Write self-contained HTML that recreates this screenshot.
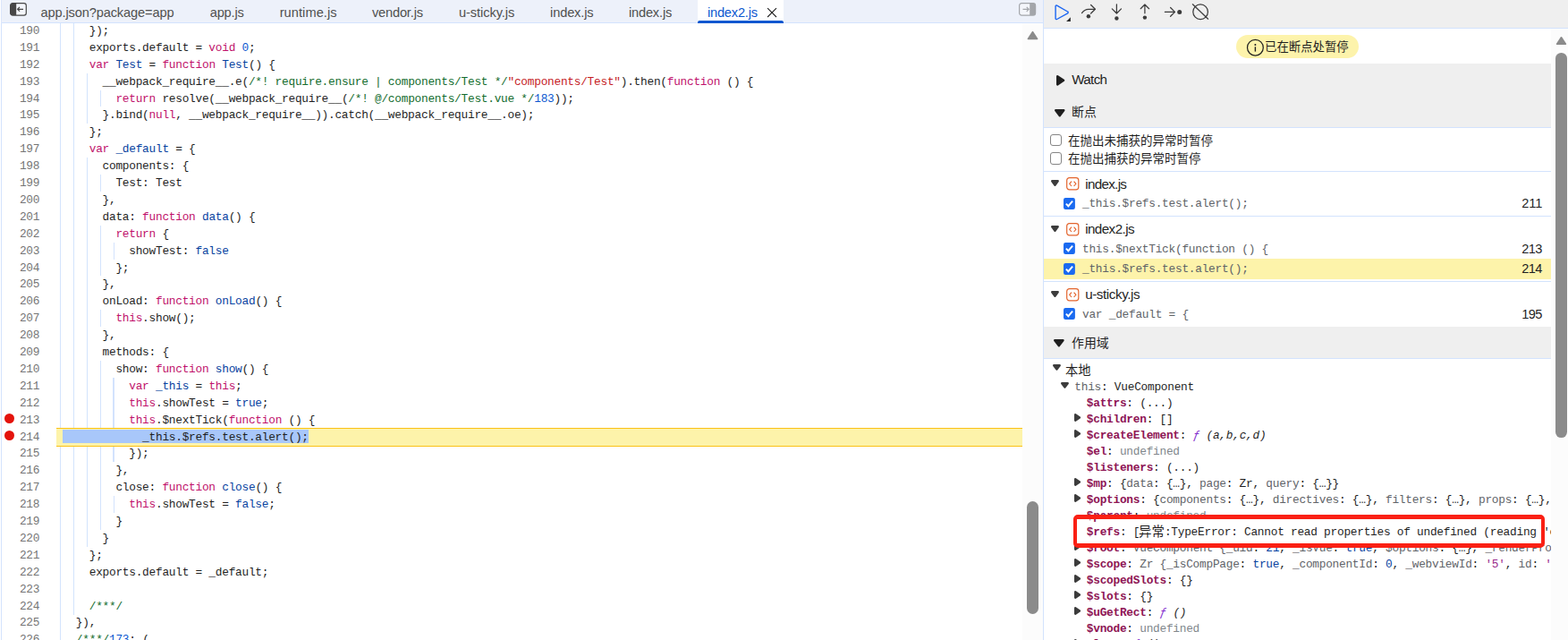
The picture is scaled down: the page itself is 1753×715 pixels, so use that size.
<!DOCTYPE html><html><head><meta charset="utf-8"><title>DevTools</title><style>
*{margin:0;padding:0;box-sizing:border-box}
html,body{width:1753px;height:715px;overflow:hidden;background:#fff}
body{position:relative;font-family:"Liberation Sans",sans-serif;color:#1f1f1f}
.a{position:absolute}
.m{font-family:"Liberation Mono",monospace;font-size:12.8px;letter-spacing:-0.254px;white-space:pre}
.cl{position:absolute;left:70.0px;height:18.9px;line-height:18.9px}
.ln{position:absolute;left:0;width:44.2px;text-align:right;height:18.9px;line-height:18.9px;color:#757575}
.k{color:#c0116b}.d{color:#0842a0}.n{color:#0b57d0}.s{color:#c5221f}.c{color:#146c2e}.t{color:#0842a0}
.g{position:absolute;width:1px;background:#d3e3fd}
.ui{position:absolute;white-space:pre;line-height:20px;height:20px}
svg{position:absolute;overflow:visible}
svg text{font-family:"Liberation Sans","Noto Sans CJK SC",sans-serif;fill:#1f1f1f;white-space:pre}
</style></head><body>
<div class="a" id="editor" style="left:0;top:26px;width:1143px;height:689px;overflow:hidden">
<div class="a" style="left:0;top:-26px;width:1143px;height:715px">
<div class="g" style="left:67px;top:25.00px;height:699.30px;width:1px"></div>
<div class="g" style="left:82px;top:25.00px;height:661.50px;width:1px"></div>
<div class="g" style="left:97px;top:81.70px;height:56.70px;width:1px"></div>
<div class="g" style="left:97px;top:176.20px;height:434.70px;width:1px"></div>
<div class="g" style="left:112px;top:100.60px;height:18.90px;width:1px"></div>
<div class="g" style="left:112px;top:195.10px;height:18.90px;width:1px"></div>
<div class="g" style="left:112px;top:251.80px;height:56.70px;width:1px"></div>
<div class="g" style="left:112px;top:346.30px;height:18.90px;width:1px"></div>
<div class="g" style="left:112px;top:403.00px;height:189.00px;width:1px"></div>
<div class="g" style="left:127px;top:270.70px;height:18.90px;width:1px"></div>
<div class="g" style="left:126px;top:421.90px;height:94.50px;width:2px"></div>
<div class="g" style="left:127px;top:554.20px;height:18.90px;width:1px"></div>
<div class="g" style="left:142px;top:478.60px;height:18.90px;width:1px"></div>
<div class="a" style="left:63px;top:478px;width:1080px;height:21px;background:#fdf3aa;border-top:1px solid #fbc116;border-bottom:1px solid #fbc116"></div>
<div class="a" style="left:70px;top:480px;width:275px;height:15px;background:#a8c7fa"></div>
<div class="ln m" style="top:25.90px">190</div>
<div class="cl m" style="top:25.90px">    });</div>
<div class="ln m" style="top:44.80px">191</div>
<div class="cl m" style="top:44.80px">    exports.default = <span class="k">void</span> <span class="n">0</span>;</div>
<div class="ln m" style="top:63.70px">192</div>
<div class="cl m" style="top:63.70px">    <span class="k">var</span> <span class="d">Test</span> = <span class="k">function</span> <span class="d">Test</span>() {</div>
<div class="ln m" style="top:82.60px">193</div>
<div class="cl m" style="top:82.60px">      __webpack_require__.e(<span class="c">/*! require.ensure | components/Test */</span><span class="s">"components/Test"</span>).then(<span class="k">function</span> () {</div>
<div class="ln m" style="top:101.50px">194</div>
<div class="cl m" style="top:101.50px">        <span class="k">return</span> resolve(__webpack_require__(<span class="c">/*! @/components/Test.vue */</span><span class="n">183</span>));</div>
<div class="ln m" style="top:120.40px">195</div>
<div class="cl m" style="top:120.40px">      }.bind(<span class="k">null</span>, __webpack_require__)).catch(__webpack_require__.oe);</div>
<div class="ln m" style="top:139.30px">196</div>
<div class="cl m" style="top:139.30px">    };</div>
<div class="ln m" style="top:158.20px">197</div>
<div class="cl m" style="top:158.20px">    <span class="k">var</span> <span class="d">_default</span> = {</div>
<div class="ln m" style="top:177.10px">198</div>
<div class="cl m" style="top:177.10px">      components: {</div>
<div class="ln m" style="top:196.00px">199</div>
<div class="cl m" style="top:196.00px">        Test: Test</div>
<div class="ln m" style="top:214.90px">200</div>
<div class="cl m" style="top:214.90px">      },</div>
<div class="ln m" style="top:233.80px">201</div>
<div class="cl m" style="top:233.80px">      data: <span class="k">function</span> <span class="d">data</span>() {</div>
<div class="ln m" style="top:252.70px">202</div>
<div class="cl m" style="top:252.70px">        <span class="k">return</span> {</div>
<div class="ln m" style="top:271.60px">203</div>
<div class="cl m" style="top:271.60px">          showTest: <span class="t">false</span></div>
<div class="ln m" style="top:290.50px">204</div>
<div class="cl m" style="top:290.50px">        };</div>
<div class="ln m" style="top:309.40px">205</div>
<div class="cl m" style="top:309.40px">      },</div>
<div class="ln m" style="top:328.30px">206</div>
<div class="cl m" style="top:328.30px">      onLoad: <span class="k">function</span> <span class="d">onLoad</span>() {</div>
<div class="ln m" style="top:347.20px">207</div>
<div class="cl m" style="top:347.20px">        <span class="k">this</span>.show();</div>
<div class="ln m" style="top:366.10px">208</div>
<div class="cl m" style="top:366.10px">      },</div>
<div class="ln m" style="top:385.00px">209</div>
<div class="cl m" style="top:385.00px">      methods: {</div>
<div class="ln m" style="top:403.90px">210</div>
<div class="cl m" style="top:403.90px">        show: <span class="k">function</span> <span class="d">show</span>() {</div>
<div class="ln m" style="top:422.80px">211</div>
<div class="cl m" style="top:422.80px">          <span class="k">var</span> <span class="d">_this</span> = <span class="k">this</span>;</div>
<div class="ln m" style="top:441.70px">212</div>
<div class="cl m" style="top:441.70px">          <span class="k">this</span>.showTest = <span class="t">true</span>;</div>
<div class="ln m" style="top:460.60px">213</div>
<div class="cl m" style="top:460.60px">          <span class="k">this</span>.$nextTick(<span class="k">function</span> () {</div>
<div class="ln m" style="top:479.50px">214</div>
<div class="cl m" style="top:479.50px">            _this.$refs.test.alert();</div>
<div class="ln m" style="top:498.40px">215</div>
<div class="cl m" style="top:498.40px">          });</div>
<div class="ln m" style="top:517.30px">216</div>
<div class="cl m" style="top:517.30px">        },</div>
<div class="ln m" style="top:536.20px">217</div>
<div class="cl m" style="top:536.20px">        close: <span class="k">function</span> <span class="d">close</span>() {</div>
<div class="ln m" style="top:555.10px">218</div>
<div class="cl m" style="top:555.10px">          <span class="k">this</span>.showTest = <span class="t">false</span>;</div>
<div class="ln m" style="top:574.00px">219</div>
<div class="cl m" style="top:574.00px">        }</div>
<div class="ln m" style="top:592.90px">220</div>
<div class="cl m" style="top:592.90px">      }</div>
<div class="ln m" style="top:611.80px">221</div>
<div class="cl m" style="top:611.80px">    };</div>
<div class="ln m" style="top:630.70px">222</div>
<div class="cl m" style="top:630.70px">    exports.default = _default;</div>
<div class="ln m" style="top:649.60px">223</div>
<div class="ln m" style="top:668.50px">224</div>
<div class="cl m" style="top:668.50px">    <span class="c">/***/</span></div>
<div class="ln m" style="top:687.40px">225</div>
<div class="cl m" style="top:687.40px">  }),</div>
<div class="ln m" style="top:706.30px">226</div>
<div class="cl m" style="top:706.30px">  <span class="c">/***/</span><span class="n">173</span>: (</div>
<div class="a" style="left:4.7px;top:462.1px;width:11.2px;height:11.2px;border-radius:50%;background:#e4130c"></div>
<div class="a" style="left:4.7px;top:481.2px;width:11.2px;height:11.2px;border-radius:50%;background:#e4130c"></div>
</div></div>
<div class="a" style="left:1px;top:0;width:1px;height:715px;background:#d3e3fd"></div>
<div class="a" id="tabbar" style="left:2px;top:0;width:1164px;height:26px;background:#edf1fa;border-bottom:1px solid #d3e3fd"></div>
<div class="a" style="left:1px;top:0;width:1px;height:26px;background:#dbe6fb"></div>
<div class="ui" style="left:45.50px;top:4.24px;font-size:14.6px;letter-spacing:-0.121px;color:#505050;">app.json?package=app</div>
<div class="ui" style="left:234.70px;top:4.24px;font-size:14.6px;letter-spacing:-0.156px;color:#505050;">app.js</div>
<div class="ui" style="left:312.70px;top:4.24px;font-size:14.6px;letter-spacing:0.068px;color:#505050;">runtime.js</div>
<div class="ui" style="left:415.90px;top:4.24px;font-size:14.6px;letter-spacing:-0.159px;color:#505050;">vendor.js</div>
<div class="ui" style="left:512.90px;top:4.24px;font-size:14.6px;letter-spacing:-0.060px;color:#505050;">u-sticky.js</div>
<div class="ui" style="left:615.10px;top:4.24px;font-size:14.6px;letter-spacing:-0.142px;color:#505050;">index.js</div>
<div class="ui" style="left:702.90px;top:4.24px;font-size:14.6px;letter-spacing:-0.156px;color:#505050;">index.js</div>
<div class="a" style="left:780px;top:0;width:95.5px;height:25px;background:#fff"></div>
<div class="a" style="left:780px;top:23px;width:95.5px;height:3px;background:#0b57d0;border-radius:2px 2px 0 0"></div>
<div class="ui" style="left:791.00px;top:4.24px;font-size:14.6px;letter-spacing:-0.200px;color:#0b57d0;">index2.js</div>
<svg style="left:856px;top:7px" width="14" height="14" viewBox="0 0 14 14"><path d="M2.1 2.1 L12 12 M12 2.1 L2.1 12" stroke="#1f1f1f" stroke-width="1.1" fill="none"/></svg>
<svg style="left:11px;top:3.1px" width="20" height="15" viewBox="0 0 20 15"><rect x="0.6" y="0.6" width="17.7" height="13.5" rx="2.6" fill="#f4f6fb" stroke="#474747" stroke-width="1.2"/><path d="M0.6 3.2 a2.6 2.6 0 0 1 2.6 -2.6 H7.2 V14.1 H3.2 a2.6 2.6 0 0 1 -2.6 -2.6 Z" fill="#474747"/><path d="M15 7.3 H8.6 M11 4.9 L8.6 7.3 L11 9.7" stroke="#474747" stroke-width="1.2" fill="none"/></svg>
<svg style="left:1138.5px;top:3.1px" width="20" height="15" viewBox="0 0 20 15"><rect x="0.6" y="0.6" width="18" height="13.5" rx="2.6" fill="#f4f6fb" stroke="#a3a6ab" stroke-width="1.2"/><path d="M12.2 0.6 H16 a2.6 2.6 0 0 1 2.6 2.6 V11.5 a2.6 2.6 0 0 1 -2.6 2.6 H12.2 Z" fill="#a3a6ab"/><path d="M4.5 7.3 H11.2 M8.7 4.8 L11.2 7.3 L8.7 9.8" stroke="#a3a6ab" stroke-width="1.2" fill="none"/></svg>
<div class="a" style="left:1143px;top:26px;width:23px;height:689px;background:#fcfcfc"></div>
<svg style="left:1148px;top:34px" width="13" height="11" viewBox="0 0 13 11"><path d="M6.5 1.6 L11.6 9.4 H1.4 Z" fill="#8b8b8b" stroke="#8b8b8b" stroke-width="1.6" stroke-linejoin="round"/></svg>
<div class="a" style="left:1147.6px;top:559.6px;width:13.3px;height:126.4px;border-radius:6.6px;background:#8b8b8b"></div>
<div class="a" style="left:1166px;top:0;width:1px;height:715px;background:#d3e3fd"></div>
<div class="a" style="left:1167px;top:0;width:586px;height:32px;background:#efefef;border-bottom:1px solid #d3e3fd"></div>
<svg style="left:1177px;top:3px" width="24" height="24" viewBox="0 0 24 24"><path d="M3.1 4.1 a1 1 0 0 1 1.5 -0.9 L16.6 10 a1 1 0 0 1 0 1.8 L4.6 18.5 a1 1 0 0 1 -1.5 -0.9 Z" fill="none" stroke="#1b66f2" stroke-width="1.4" stroke-linejoin="round"/><path d="M19.9 16.3 V20.9 H15.1 Z" fill="#2b2b2b"/></svg>
<svg style="left:1207px;top:3px" width="22" height="22" viewBox="0 0 22 22"><path d="M2.5 11.6 C4.3 9 6.6 7.3 9.8 7.3 H17.2" fill="none" stroke="#3c3c3c" stroke-width="1.25" stroke-linecap="round"/><path d="M12.6 2.5 L17.4 7.3 L12.6 12" fill="none" stroke="#3c3c3c" stroke-width="1.25" stroke-linecap="round" stroke-linejoin="round"/><circle cx="9.9" cy="15.2" r="2.2" fill="#3c3c3c"/></svg>
<svg style="left:1238px;top:3px" width="22" height="22" viewBox="0 0 22 22"><path d="M10.4 1.8 V11.8 M5.3 6.9 L10.4 12 L15.5 6.9" fill="none" stroke="#3c3c3c" stroke-width="1.25" stroke-linecap="round" stroke-linejoin="round"/><circle cx="10.4" cy="17.5" r="2.2" fill="#3c3c3c"/></svg>
<svg style="left:1269px;top:3px" width="22" height="22" viewBox="0 0 22 22"><path d="M10.9 11.8 V2 M6.2 6.7 L10.9 2 L15.6 6.7" fill="none" stroke="#3c3c3c" stroke-width="1.25" stroke-linecap="round" stroke-linejoin="round"/><circle cx="10.9" cy="16.6" r="2.2" fill="#3c3c3c"/></svg>
<svg style="left:1300px;top:3px" width="24" height="22" viewBox="0 0 24 22"><path d="M2.4 10.4 H13.4 M8.6 5.5 L13.5 10.4 L8.6 15.3" fill="none" stroke="#3c3c3c" stroke-width="1.25" stroke-linecap="round" stroke-linejoin="round"/><circle cx="18.7" cy="10.4" r="2.5" fill="#3c3c3c"/></svg>
<svg style="left:1331px;top:3px" width="22" height="22" viewBox="0 0 22 22"><circle cx="11.1" cy="10.3" r="8.3" fill="none" stroke="#3c3c3c" stroke-width="1.25"/><path d="M2.4 1.8 L19.6 18.2" stroke="#3c3c3c" stroke-width="1.25" stroke-linecap="round"/></svg>
<div class="a" style="left:1734px;top:32px;width:19px;height:683px;background:#fcfcfc"></div>
<svg style="left:1739px;top:40px" width="13" height="11" viewBox="0 0 13 11"><path d="M6.5 1.8 L11.4 9.2 H1.6 Z" fill="#8b8b8b" stroke="#8b8b8b" stroke-width="1.6" stroke-linejoin="round"/></svg>
<div class="a" style="left:1739px;top:58.7px;width:12.7px;height:430px;border-radius:6.4px;background:#8b8b8b"></div>
<div class="a" id="rp" style="left:1167px;top:32px;width:567px;height:683px;overflow:hidden">
<div class="a" style="left:-1167px;top:-32px;width:1753px;height:715px">
<div class="a" style="left:1382px;top:39px;width:137.2px;height:26px;border-radius:13px;background:#fdf3ab"></div>
<svg style="left:1393px;top:43px" width="21" height="21" viewBox="0 0 21 21"><circle cx="10.4" cy="10.2" r="8.9" fill="none" stroke="#1f1f1f" stroke-width="1.25"/><circle cx="10.4" cy="6.9" r="1" fill="#1f1f1f"/><path d="M10.4 9.3 V14.6" stroke="#1f1f1f" stroke-width="1.4"/></svg>
<svg style="left:1413.70px;top:57.09px" width="1" height="1"><text x="0" y="0" font-size="13.4">已在断点处暂停</text></svg>
<div class="a" style="left:1167px;top:71px;width:600px;height:72px;background:#efefef;border-bottom:1px solid #d3e3fd"></div>
<svg style="left:1180.8px;top:84.0px" width="9.3" height="11.6" viewBox="0 0 9.3 11.6"><path d="M1.2 1.2 L8.100000000000001 5.8 L1.2 10.4 Z" fill="#1f1f1f" stroke="#1f1f1f" stroke-width="2.4" stroke-linejoin="round"/></svg>
<div class="ui" style="left:1198.30px;top:79.23px;font-size:15.2px;letter-spacing:-0.696px;color:#1f1f1f;">Watch</div>
<svg style="left:1178.5px;top:121.8px" width="11.5" height="8.4" viewBox="0 0 11.5 8.4"><path d="M1.2 1.2 H10.3 L5.75 7.2 Z" fill="#1f1f1f" stroke="#1f1f1f" stroke-width="2.4" stroke-linejoin="round"/></svg>
<svg style="left:1197.80px;top:130.21px" width="1" height="1"><text x="0" y="0" font-size="13.9">断点</text></svg>
<div class="a" style="left:1174.2px;top:150.2px;width:13.2px;height:13.2px;border:1.5px solid #858585;border-radius:3px;background:#fff"></div>
<svg style="left:1194.10px;top:162.39px" width="1" height="1"><text x="0" y="0" font-size="13.5">在抛出未捕获的异常时暂停</text></svg>
<div class="a" style="left:1174.2px;top:170.4px;width:13.2px;height:13.2px;border:1.5px solid #858585;border-radius:3px;background:#fff"></div>
<svg style="left:1194.10px;top:182.24px" width="1" height="1"><text x="0" y="0" font-size="13.5">在抛出捕获的异常时暂停</text></svg>
<div class="a" style="left:1167px;top:191px;width:600px;height:1px;background:#d3e3fd"></div>
<svg style="left:1174.7px;top:201px" width="8.9" height="7" viewBox="0 0 8.9 7"><path d="M1.2 1.2 H7.7 L4.45 5.8 Z" fill="#3c3c3c" stroke="#3c3c3c" stroke-width="2.4" stroke-linejoin="round"/></svg>
<svg style="left:1191.5px;top:198px" width="15" height="15" viewBox="0 0 15 15"><rect x="0.7" y="0.7" width="13.1" height="13.1" rx="2.8" fill="none" stroke="#e3652e" stroke-width="1.2"/><path d="M6 4.6 L3.7 7.3 L6 10 M8.6 4.6 L10.9 7.3 L8.6 10" fill="none" stroke="#e3652e" stroke-width="1.15"/></svg>
<div class="ui" style="left:1213.20px;top:196.03px;font-size:15.2px;letter-spacing:-0.675px;color:#1f1f1f;">index.js</div>
<svg style="left:1189.2px;top:221px" width="12.9" height="12.9" viewBox="0 0 13 13"><rect width="13" height="13" rx="2.2" fill="#1a6af0"/><path d="M2.9 6.7 L5.4 9.3 L10.2 3.6" fill="none" stroke="#fff" stroke-width="1.9"/></svg>
<div class="a m" style="left:1210.00px;top:219.30px;height:18px;line-height:18px;color:#606367;">_this.$refs.test.alert();</div>
<div class="ui" style="left:1701.30px;top:217.34px;font-size:14.6px;letter-spacing:-0.143px;color:#1f1f1f;">211</div>
<div class="a" style="left:1167px;top:241px;width:600px;height:1px;background:#d3e3fd"></div>
<svg style="left:1174.7px;top:251.5px" width="8.9" height="7" viewBox="0 0 8.9 7"><path d="M1.2 1.2 H7.7 L4.45 5.8 Z" fill="#3c3c3c" stroke="#3c3c3c" stroke-width="2.4" stroke-linejoin="round"/></svg>
<svg style="left:1191.5px;top:248.8px" width="15" height="15" viewBox="0 0 15 15"><rect x="0.7" y="0.7" width="13.1" height="13.1" rx="2.8" fill="none" stroke="#e3652e" stroke-width="1.2"/><path d="M6 4.6 L3.7 7.3 L6 10 M8.6 4.6 L10.9 7.3 L8.6 10" fill="none" stroke="#e3652e" stroke-width="1.15"/></svg>
<div class="ui" style="left:1213.20px;top:246.43px;font-size:15.2px;letter-spacing:-0.571px;color:#1f1f1f;">index2.js</div>
<svg style="left:1189.2px;top:271.3px" width="12.9" height="12.9" viewBox="0 0 13 13"><rect width="13" height="13" rx="2.2" fill="#1a6af0"/><path d="M2.9 6.7 L5.4 9.3 L10.2 3.6" fill="none" stroke="#fff" stroke-width="1.9"/></svg>
<div class="a m" style="left:1210.00px;top:270.20px;height:18px;line-height:18px;color:#606367;">this.$nextTick(function () {</div>
<div class="ui" style="left:1701.30px;top:268.24px;font-size:14.6px;letter-spacing:-0.691px;color:#1f1f1f;">213</div>
<div class="a" style="left:1167px;top:288.8px;width:600px;height:23px;background:#fdf3aa"></div>
<svg style="left:1189.2px;top:293.7px" width="12.9" height="12.9" viewBox="0 0 13 13"><rect width="13" height="13" rx="2.2" fill="#1a6af0"/><path d="M2.9 6.7 L5.4 9.3 L10.2 3.6" fill="none" stroke="#fff" stroke-width="1.9"/></svg>
<div class="a m" style="left:1210.00px;top:292.30px;height:18px;line-height:18px;color:#606367;">_this.$refs.test.alert();</div>
<div class="ui" style="left:1701.30px;top:290.34px;font-size:14.6px;letter-spacing:-0.691px;color:#1f1f1f;">214</div>
<div class="a" style="left:1167px;top:314px;width:600px;height:1px;background:#d3e3fd"></div>
<svg style="left:1174.7px;top:324.8px" width="8.9" height="7" viewBox="0 0 8.9 7"><path d="M1.2 1.2 H7.7 L4.45 5.8 Z" fill="#3c3c3c" stroke="#3c3c3c" stroke-width="2.4" stroke-linejoin="round"/></svg>
<svg style="left:1191.5px;top:322px" width="15" height="15" viewBox="0 0 15 15"><rect x="0.7" y="0.7" width="13.1" height="13.1" rx="2.8" fill="none" stroke="#e3652e" stroke-width="1.2"/><path d="M6 4.6 L3.7 7.3 L6 10 M8.6 4.6 L10.9 7.3 L8.6 10" fill="none" stroke="#e3652e" stroke-width="1.15"/></svg>
<div class="ui" style="left:1213.20px;top:319.43px;font-size:15.2px;letter-spacing:-0.419px;color:#1f1f1f;">u-sticky.js</div>
<svg style="left:1189.2px;top:344.2px" width="12.9" height="12.9" viewBox="0 0 13 13"><rect width="13" height="13" rx="2.2" fill="#1a6af0"/><path d="M2.9 6.7 L5.4 9.3 L10.2 3.6" fill="none" stroke="#fff" stroke-width="1.9"/></svg>
<div class="a m" style="left:1210.00px;top:343.00px;height:18px;line-height:18px;color:#606367;">var _default = {</div>
<div class="ui" style="left:1701.30px;top:341.04px;font-size:14.6px;letter-spacing:-0.691px;color:#1f1f1f;">195</div>
<div class="a" style="left:1167px;top:365px;width:600px;height:36px;background:#efefef;border-bottom:1px solid #d3e3fd"></div>
<svg style="left:1178.4px;top:379.4px" width="11.7" height="8.4" viewBox="0 0 11.7 8.4"><path d="M1.2 1.2 H10.5 L5.85 7.2 Z" fill="#1f1f1f" stroke="#1f1f1f" stroke-width="2.4" stroke-linejoin="round"/></svg>
<svg style="left:1197.90px;top:388.09px" width="1" height="1"><text x="0" y="0" font-size="13.9">作用域</text></svg>
<svg style="left:1176.6px;top:407.3px" width="8.9" height="6.8" viewBox="0 0 8.9 6.8"><path d="M1.2 1.2 H7.7 L4.45 5.6 Z" fill="#3c3c3c" stroke="#3c3c3c" stroke-width="2.4" stroke-linejoin="round"/></svg>
<svg style="left:1191.30px;top:419.00px" width="1" height="1"><text x="0" y="0" font-size="14.3">本地</text></svg>
<div class="a m" style="left:1201.30px;top:424.00px;height:18px;line-height:18px;color:#1f1f1f;"><span style="color:#5f6368">this</span>: VueComponent</div>
<svg style="left:1185.7px;top:426.7px" width="8.9" height="6.8" viewBox="0 0 8.9 6.8"><path d="M1.2 1.2 H7.7 L4.45 5.6 Z" fill="#3c3c3c" stroke="#3c3c3c" stroke-width="2.4" stroke-linejoin="round"/></svg>
<div class="a m" style="left:1214.80px;top:442.00px;height:18px;line-height:18px;color:#1f1f1f;"><b style="color:#8e1554">$attrs</b>: (...)</div>
<div class="a m" style="left:1214.80px;top:460.00px;height:18px;line-height:18px;color:#1f1f1f;"><b style="color:#8e1554">$children</b>: []</div>
<svg style="left:1200.8px;top:462.0px" width="7.2" height="8.9" viewBox="0 0 7.2 8.9"><path d="M1.2 1.2 L6.0 4.45 L1.2 7.7 Z" fill="#3c3c3c" stroke="#3c3c3c" stroke-width="2.4" stroke-linejoin="round"/></svg>
<div class="a m" style="left:1214.80px;top:478.00px;height:18px;line-height:18px;color:#1f1f1f;"><b style="color:#8e1554">$createElement</b>: <i style="color:#8430ce">ƒ</i> <i>(a,b,c,d)</i></div>
<svg style="left:1200.8px;top:480.0px" width="7.2" height="8.9" viewBox="0 0 7.2 8.9"><path d="M1.2 1.2 L6.0 4.45 L1.2 7.7 Z" fill="#3c3c3c" stroke="#3c3c3c" stroke-width="2.4" stroke-linejoin="round"/></svg>
<div class="a m" style="left:1214.80px;top:496.00px;height:18px;line-height:18px;color:#1f1f1f;"><b style="color:#8e1554">$el</b>: <span style="color:#80868b">undefined</span></div>
<div class="a m" style="left:1214.80px;top:514.00px;height:18px;line-height:18px;color:#1f1f1f;"><b style="color:#8e1554">$listeners</b>: (...)</div>
<div class="a m" style="left:1214.80px;top:532.00px;height:18px;line-height:18px;color:#1f1f1f;"><b style="color:#8e1554">$mp</b>: {<span style="color:#5f6368">data</span>: {…}, <span style="color:#5f6368">page</span>: Zr, <span style="color:#5f6368">query</span>: {…}}</div>
<svg style="left:1200.8px;top:534.0px" width="7.2" height="8.9" viewBox="0 0 7.2 8.9"><path d="M1.2 1.2 L6.0 4.45 L1.2 7.7 Z" fill="#3c3c3c" stroke="#3c3c3c" stroke-width="2.4" stroke-linejoin="round"/></svg>
<div class="a m" style="left:1214.80px;top:550.00px;height:18px;line-height:18px;color:#1f1f1f;"><b style="color:#8e1554">$options</b>: {<span style="color:#5f6368">components</span>: {…}, <span style="color:#5f6368">directives</span>: {…}, <span style="color:#5f6368">filters</span>: {…}, <span style="color:#5f6368">props</span>: {…},</div>
<svg style="left:1200.8px;top:552.0px" width="7.2" height="8.9" viewBox="0 0 7.2 8.9"><path d="M1.2 1.2 L6.0 4.45 L1.2 7.7 Z" fill="#3c3c3c" stroke="#3c3c3c" stroke-width="2.4" stroke-linejoin="round"/></svg>
<div class="a m" style="left:1214.80px;top:568.00px;height:18px;line-height:18px;color:#1f1f1f;"><b style="color:#8e1554">$parent</b>: <span style="color:#80868b">undefined</span></div>
<div class="a m" style="left:1214.80px;top:586.00px;height:18px;line-height:18px;color:#1f1f1f;"><b style="color:#8e1554">$refs</b>: [</div>
<svg style="left:1273.01px;top:598.53px" width="1" height="1"><text x="0" y="0" font-size="14.45">异常</text></svg>
<div class="a m" style="left:1301.91px;top:586.00px;height:18px;line-height:18px;color:#1f1f1f;">:TypeError: Cannot read properties of undefined (reading 'c</div>
<div class="a m" style="left:1214.80px;top:604.00px;height:18px;line-height:18px;color:#1f1f1f;"><b style="color:#8e1554">$root</b>: <span style="color:#5f6368">VueComponent {</span><span style="color:#5f6368">_uid</span>: <span style="color:#0842a0">21</span>, <span style="color:#5f6368">_isVue</span>: <span style="color:#0842a0">true</span>, <span style="color:#5f6368">$options</span>: {…}, <span style="color:#5f6368">_renderProxy</span></div>
<svg style="left:1200.8px;top:606.0px" width="7.2" height="8.9" viewBox="0 0 7.2 8.9"><path d="M1.2 1.2 L6.0 4.45 L1.2 7.7 Z" fill="#3c3c3c" stroke="#3c3c3c" stroke-width="2.4" stroke-linejoin="round"/></svg>
<div class="a m" style="left:1214.80px;top:622.00px;height:18px;line-height:18px;color:#1f1f1f;"><b style="color:#8e1554">$scope</b>: <span style="color:#5f6368">Zr {</span><span style="color:#5f6368">_isCompPage</span>: <span style="color:#0842a0">true</span>, <span style="color:#5f6368">_componentId</span>: <span style="color:#0842a0">0</span>, <span style="color:#5f6368">_webviewId</span>: <span style="color:#9a2b8c">'5'</span>, <span style="color:#5f6368">id</span>: <span style="color:#9a2b8c">'5'</span></div>
<svg style="left:1200.8px;top:624.0px" width="7.2" height="8.9" viewBox="0 0 7.2 8.9"><path d="M1.2 1.2 L6.0 4.45 L1.2 7.7 Z" fill="#3c3c3c" stroke="#3c3c3c" stroke-width="2.4" stroke-linejoin="round"/></svg>
<div class="a m" style="left:1214.80px;top:640.00px;height:18px;line-height:18px;color:#1f1f1f;"><b style="color:#8e1554">$scopedSlots</b>: {}</div>
<svg style="left:1200.8px;top:642.0px" width="7.2" height="8.9" viewBox="0 0 7.2 8.9"><path d="M1.2 1.2 L6.0 4.45 L1.2 7.7 Z" fill="#3c3c3c" stroke="#3c3c3c" stroke-width="2.4" stroke-linejoin="round"/></svg>
<div class="a m" style="left:1214.80px;top:658.00px;height:18px;line-height:18px;color:#1f1f1f;"><b style="color:#8e1554">$slots</b>: {}</div>
<svg style="left:1200.8px;top:660.0px" width="7.2" height="8.9" viewBox="0 0 7.2 8.9"><path d="M1.2 1.2 L6.0 4.45 L1.2 7.7 Z" fill="#3c3c3c" stroke="#3c3c3c" stroke-width="2.4" stroke-linejoin="round"/></svg>
<div class="a m" style="left:1214.80px;top:676.00px;height:18px;line-height:18px;color:#1f1f1f;"><b style="color:#8e1554">$uGetRect</b>: <i style="color:#8430ce">ƒ</i> <i>()</i></div>
<svg style="left:1200.8px;top:678.0px" width="7.2" height="8.9" viewBox="0 0 7.2 8.9"><path d="M1.2 1.2 L6.0 4.45 L1.2 7.7 Z" fill="#3c3c3c" stroke="#3c3c3c" stroke-width="2.4" stroke-linejoin="round"/></svg>
<div class="a m" style="left:1214.80px;top:694.00px;height:18px;line-height:18px;color:#1f1f1f;"><b style="color:#8e1554">$vnode</b>: <span style="color:#80868b">undefined</span></div>
<div class="a m" style="left:1214.80px;top:711.00px;height:18px;line-height:18px;color:#1f1f1f;"><b style="color:#8e1554">close</b>: <i style="color:#8430ce">ƒ</i> <i>()</i></div>
<svg style="left:1200.8px;top:714.0px" width="7.2" height="8.9" viewBox="0 0 7.2 8.9"><path d="M1.2 1.2 L6.0 4.45 L1.2 7.7 Z" fill="#3c3c3c" stroke="#3c3c3c" stroke-width="2.4" stroke-linejoin="round"/></svg>
</div></div>
<div class="a" style="left:1200.3px;top:575.2px;width:526.3px;height:37.1px;border:solid #fa2014;border-width:5.3px 4.8px;border-radius:5px"></div>
</body></html>
